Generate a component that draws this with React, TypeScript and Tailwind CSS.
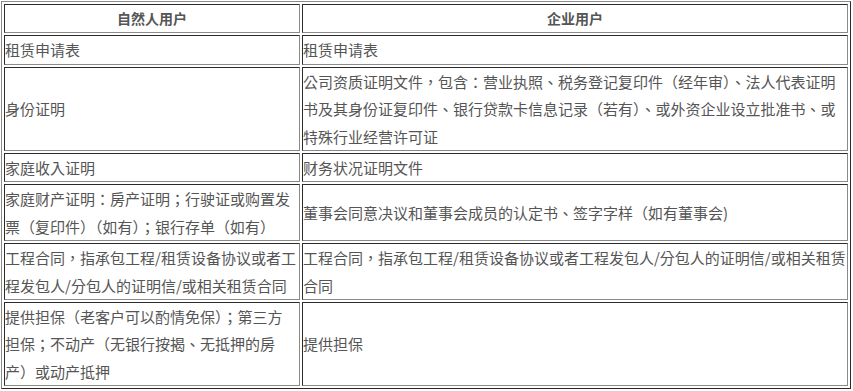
import React from "react";

const rows: [React.ReactNode, React.ReactNode][] = [
  ["租赁申请表", "租赁申请表"],
  [
    "身份证明",
    "公司资质证明文件，包含：营业执照、税务登记复印件（经年审）、法人代表证明书及其身份证复印件、银行贷款卡信息记录（若有）、或外资企业设立批准书、或特殊行业经营许可证",
  ],
  ["家庭收入证明", "财务状况证明文件"],
  [
    "家庭财产证明：房产证明；行驶证或购置发票（复印件）（如有）；银行存单（如有）",
    "董事会同意决议和董事会成员的认定书、签字字样（如有董事会)",
  ],
  [
    <>
      工程合同，指承包工程/租赁设备协议或者工
      <br />
      程发包人/分包人的证明信/或相关租赁合同
    </>,
    "工程合同，指承包工程/租赁设备协议或者工程发包人/分包人的证明信/或相关租赁合同",
  ],
  [
    <>
      提供担保（老客户可以酌情免保）；第三方
      <br />
      担保；不动产（无银行按揭、无抵押的房
      <br />
      产）或动产抵押
    </>,
    "提供担保",
  ],
];

const cell =
  "border border-solid border-t-[#2b2b2b] border-l-[#2b2b2b] border-b-[#8a8a8a] border-r-[#8a8a8a] p-0 align-middle";

export default function App() {
  return (
    <div className="w-[853px] h-[391px] bg-white overflow-hidden pt-px pl-px">
      <table
        className="table-fixed border-separate border-spacing-[2px] w-[850px] border border-solid border-t-[#8a8a8a] border-l-[#8a8a8a] border-b-[#2b2b2b] border-r-[#2b2b2b] text-[#555555] text-[15px] leading-[27.4px] break-all"
        style={{ fontFamily: '"Noto Sans CJK TC", "Noto Sans CJK SC", "Noto Sans", sans-serif' }}
      >
        <colgroup>
          <col className="w-[296px]" />
          <col />
        </colgroup>
        <tbody>
          <tr>
            <td className={cell + " text-center font-bold text-[14px]"}>自然人用户</td>
            <td className={cell + " text-center font-bold text-[14px]"}>企业用户</td>
          </tr>
          {rows.map((r, i) => (
            <tr key={i}>
              <td className={cell}>{r[0]}</td>
              <td className={cell}>{r[1]}</td>
            </tr>
          ))}
        </tbody>
      </table>
    </div>
  );
}
